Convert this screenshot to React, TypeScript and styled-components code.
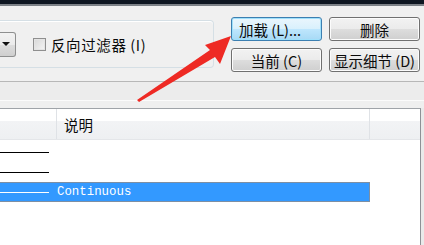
import React from "react";
import styled, { createGlobalStyle } from "styled-components";

const Global = createGlobalStyle`
  html, body { margin: 0; padding: 0; background: #f0f0f0; }
  body { font-family: "Noto Sans CJK SC", "Noto Sans", sans-serif; }
`;

const Screen = styled.div`
  position: relative;
  width: 424px;
  height: 245px;
  overflow: hidden;
  background: #f0f0f0;
  display: flex;
  flex-direction: column;
`;

const TitleBar = styled.div`
  height: 4px;
  background: #0e1621;
  border-bottom: 2px solid #7c8187;
  flex: none;
`;

const TopArea = styled.div`
  height: 75px;
  display: flex;
  align-items: flex-start;
  flex: none;
`;

const GroupBox = styled.div`
  margin-top: 14px;
  width: 213px;
  height: 46px;
  border: 1px solid #d5dfe5;
  border-left: none;
  border-radius: 0 4px 4px 0;
  box-shadow: inset 0 1px 0 #fff;
  display: flex;
  align-items: center;
`;

const ComboArrow = styled.div`
  width: 15px;
  height: 23px;
  border: 1px solid #8e8f8f;
  border-left: none;
  border-radius: 0 3px 3px 0;
  background: linear-gradient(#f2f2f2 0%, #ebebeb 50%, #dddddd 51%, #cfcfcf 100%);
  display: flex;
  align-items: center;
  justify-content: center;
`;

const ArrowDown = styled.div`
  width: 0;
  height: 0;
  border-left: 4px solid transparent;
  border-right: 4px solid transparent;
  border-top: 4px solid #111;
  margin-left: -3px;
`;

const CheckBox = styled.div`
  margin-left: 17px;
  width: 11px;
  height: 11px;
  border: 1px solid #8f8f8f;
  background: linear-gradient(135deg, #d8d8d8, #f4f4f4);
  box-shadow: inset 0 0 0 1px #e4e4e4;
`;

const Label = styled.span`
  margin-left: 5px;
  font-size: 14.5px;
  color: #0a0a0a;
  white-space: nowrap;
  letter-spacing: 0.6px;
`;

const ButtonGrid = styled.div`
  margin-left: 17px;
  margin-top: 11px;
  display: grid;
  grid-template-columns: 91px 91px;
  grid-auto-rows: 24px;
  column-gap: 7px;
  row-gap: 7px;
`;

const Btn = styled.div<{ $default?: boolean }>`
  box-sizing: border-box;
  border: 1px solid ${(p) => (p.$default ? "#3c7fb1" : "#707070")};
  border-radius: 3px;
  background: ${(p) =>
    p.$default
      ? "linear-gradient(#eaf6fd 0%, #d9f0fc 50%, #bee6fd 51%, #a7d9f5 100%)"
      : "linear-gradient(#f2f2f2 0%, #ebebeb 50%, #dddddd 51%, #cfcfcf 100%)"};
  box-shadow: inset 0 0 0 1px ${(p) => (p.$default ? "#9fe0fb" : "#fcfcfc")};
  display: flex;
  align-items: center;
  justify-content: ${(p) => (p.$default ? "flex-start" : "center")};
  padding-left: ${(p) => (p.$default ? "7px" : "0")};
  font-size: 14.5px;
  color: #0a0a0a;
  white-space: nowrap;
`;

const Band = styled.div`
  height: 26px;
  flex: none;
  border-top: 1px solid #b7b7b7;
  background: linear-gradient(#ececec 0, #ececec 18px, #fbfbfb 18px, #fbfbfb 19px, #efefef 19px);
`;

const ListArea = styled.div`
  flex: 1;
  display: flex;
`;

const List = styled.div`
  width: 420px;
  border-top: 1px solid #9fa3a8;
  border-right: 1px solid #8e9196;
  background: #fff;
  display: flex;
  flex-direction: column;
`;

const Header = styled.div`
  height: 30px;
  display: flex;
  background: linear-gradient(#ffffff 0%, #ffffff 40%, #f2f3f5 41%, #eef0f2 100%);
  border-bottom: 1px solid #e4e6e9;
  flex: none;
`;

const HeadCell = styled.div<{ $w?: number }>`
  ${(p) => (p.$w ? `width: ${p.$w}px; flex: none;` : "flex: 1;")}
  border-right: 1px solid #dfe2e6;
  display: flex;
  align-items: center;
  padding-left: 7px;
  box-sizing: border-box;
  font-size: 14.5px;
  color: #0a0a0a;
  &:last-child { border-right: none; }
`;

const Rows = styled.div`
  padding-top: 2px;
  display: flex;
  flex-direction: column;
`;

const Row = styled.div<{ $sel?: boolean }>`
  box-sizing: border-box;
  height: 20px;
  width: 370px;
  display: flex;
  align-items: center;
  background: ${(p) => (p.$sel ? "#3399ff" : "transparent")};
  border: 1px solid ${(p) => (p.$sel ? "#7d8fa3" : "transparent")};
  border-left: none;
`;

const Sample = styled.div<{ $sel?: boolean }>`
  width: 49px;
  height: 1px;
  background: ${(p) => (p.$sel ? "#fff" : "#000")};
  flex: none;
`;

const LineName = styled.span`
  margin-left: 8px;
  font-family: "Liberation Mono", "DejaVu Sans Mono", monospace;
  font-size: 12.4px;
  color: #fff;
`;

const RightStrip = styled.div`
  flex: 1;
  background: #eaeaea;
`;

const Pointer = styled.svg`
  position: absolute;
  left: 0;
  top: 0;
  pointer-events: none;
`;

export default function App() {
  return (
    <>
      <Global />
      <Screen>
        <TitleBar />
        <TopArea>
          <GroupBox>
            <ComboArrow>
              <ArrowDown />
            </ComboArrow>
            <CheckBox />
            <Label>反向过滤器 (I)</Label>
          </GroupBox>
          <ButtonGrid>
            <Btn $default>加载 (L)...</Btn>
            <Btn>删除</Btn>
            <Btn>当前 (C)</Btn>
            <Btn>显示细节 (D)</Btn>
          </ButtonGrid>
        </TopArea>
        <Band />
        <ListArea>
          <List>
            <Header>
              <HeadCell $w={57} />
              <HeadCell $w={313}>说明</HeadCell>
              <HeadCell />
            </Header>
            <Rows>
              <Row>
                <Sample />
              </Row>
              <Row>
                <Sample />
              </Row>
              <Row $sel>
                <Sample $sel />
                <LineName>Continuous</LineName>
              </Row>
            </Rows>
          </List>
          <RightStrip />
        </ListArea>
        <Pointer width="424" height="245" viewBox="0 0 424 245">
          <polygon
            points="231,36 220,64 215,57 139,102 137,100 210,50 205,45"
            fill="#ee2a24"
          />
        </Pointer>
      </Screen>
    </>
  );
}
